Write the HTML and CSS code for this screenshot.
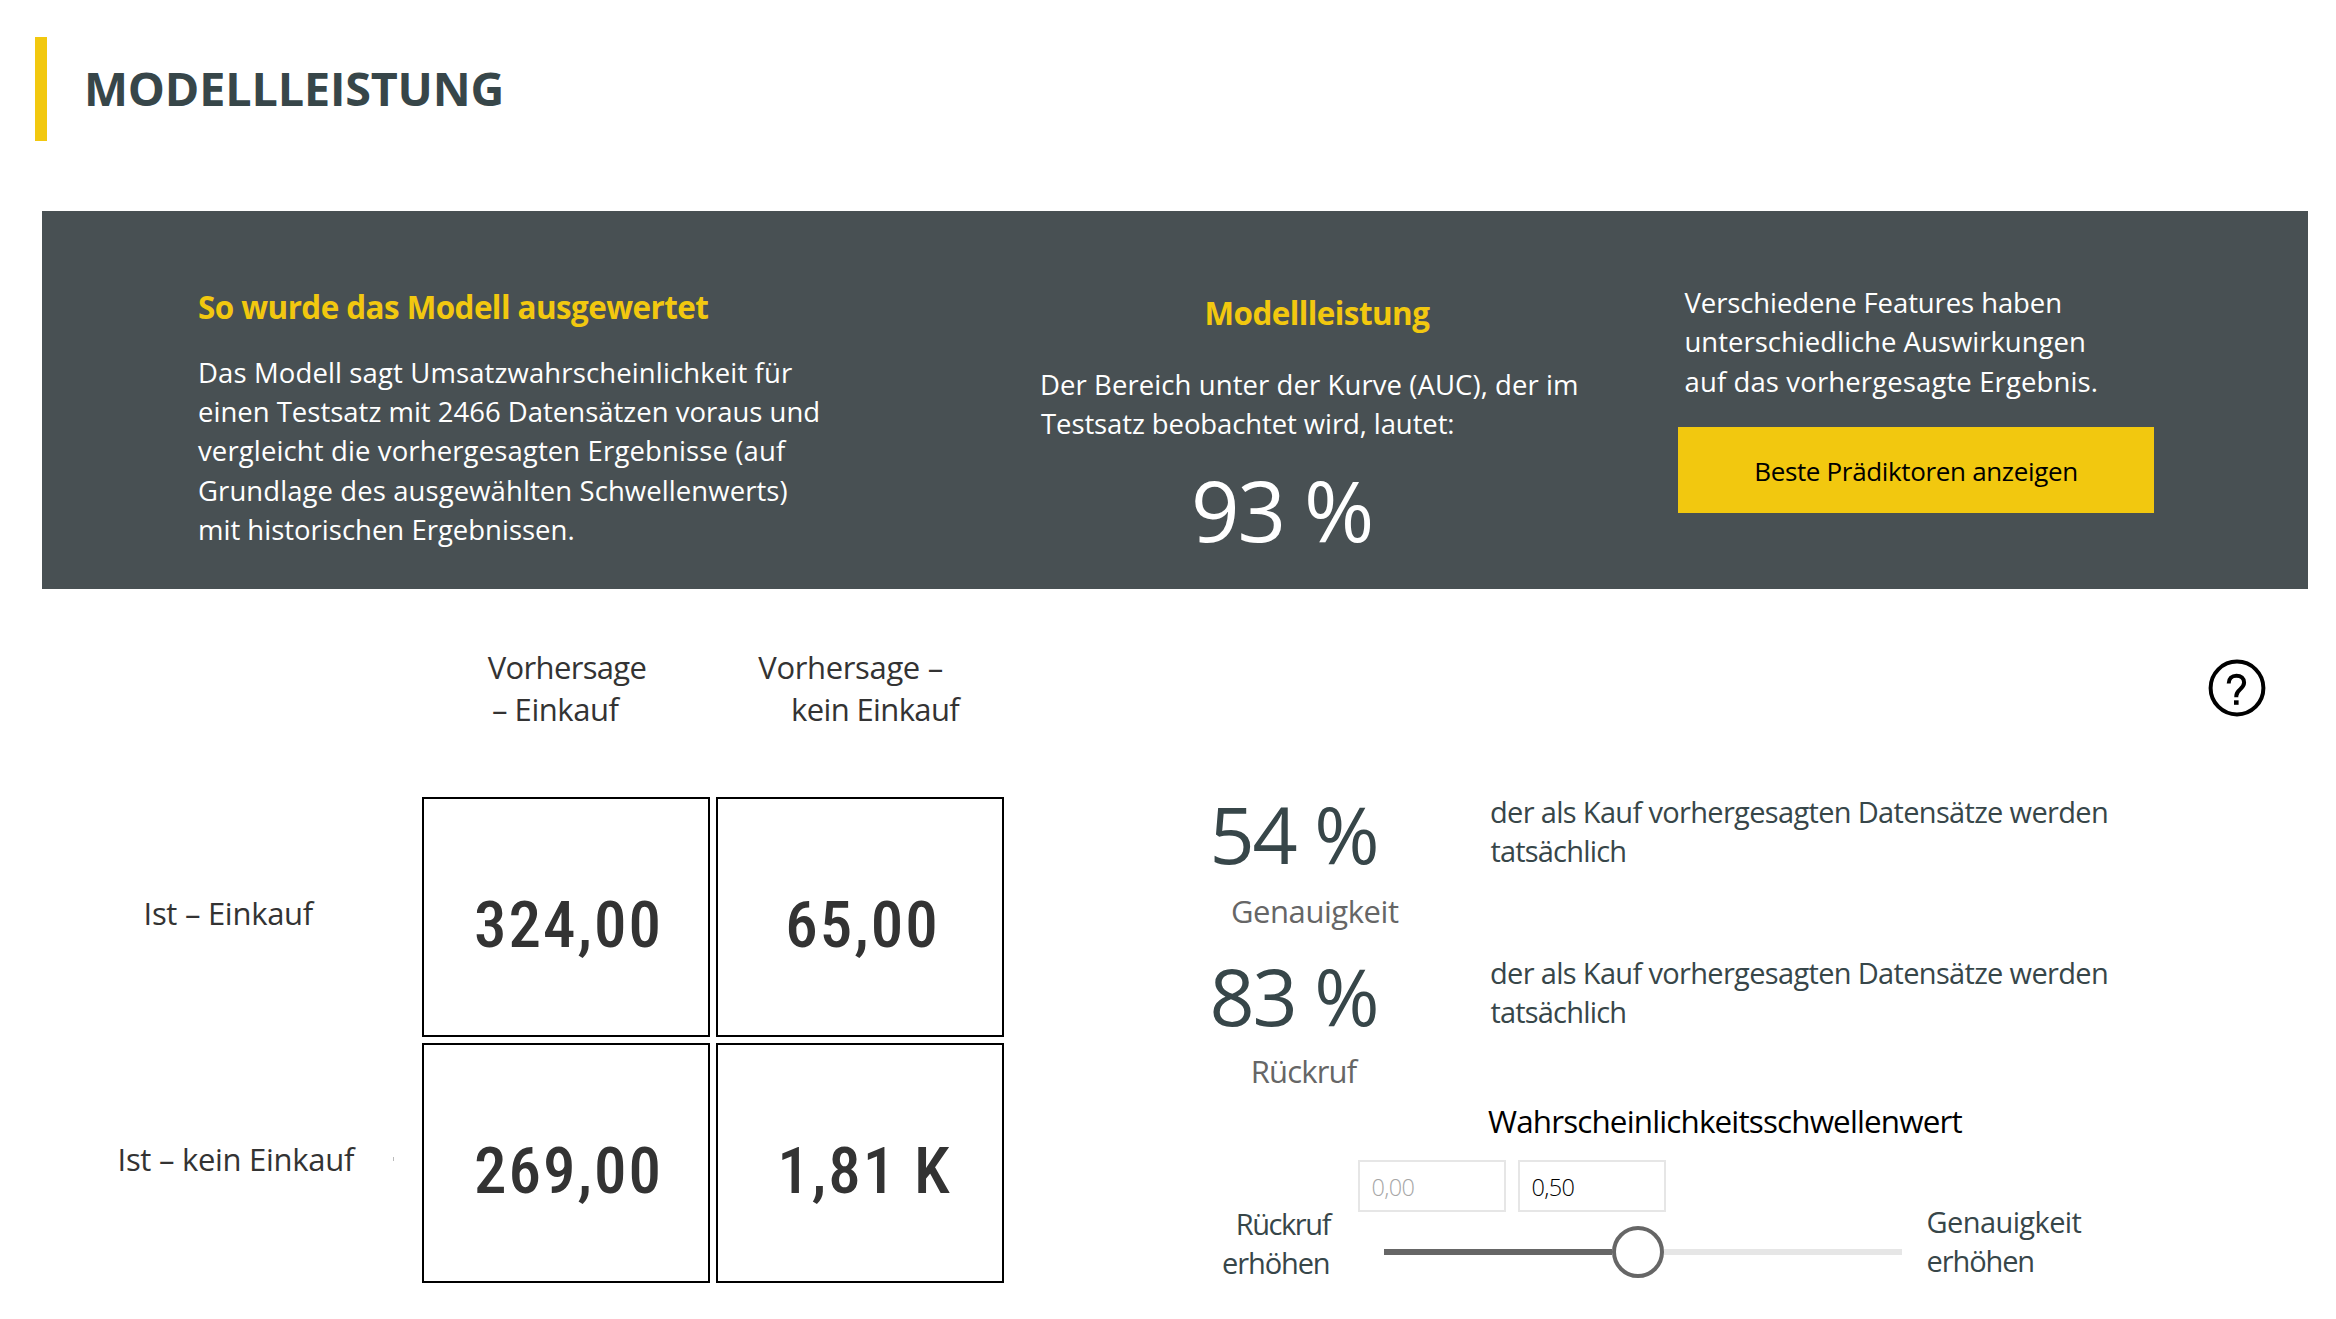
FILE: index.html
```html
<!DOCTYPE html>
<html lang="de">
<head>
<meta charset="utf-8">
<title>Modellleistung</title>
<link rel="stylesheet" href="styles.css">
</head>
<body>
<header class="page-header">
  <div class="accent"></div>
  <h1 class="page-title">MODELLLEISTUNG</h1>
</header>

<section class="banner">
  <div class="evaluation">
    <h2 class="banner-heading">So wurde das Modell ausgewertet</h2>
    <p class="banner-text">
      <span class="line looser">Das Modell sagt Umsatzwahrscheinlichkeit für</span>
      <span class="line">einen Testsatz mit 2466 Datensätzen voraus und</span>
      <span class="line looser">vergleicht die vorhergesagten Ergebnisse (auf</span>
      <span class="line loose">Grundlage des ausgewählten Schwellenwerts)</span>
      <span class="line">mit historischen Ergebnissen.</span>
    </p>
  </div>
  <div class="performance">
    <h2 class="banner-heading indent">Modellleistung</h2>
    <p class="banner-text">
      <span class="line loose">Der Bereich unter der Kurve (AUC), der im</span>
      <span class="line tight first-t">Testsatz beobachtet wird, lautet:</span>
    </p>
    <div class="auc">93 %</div>
  </div>
  <div class="features">
    <p class="banner-text">
      <span class="line tight">Verschiedene Features haben</span>
      <span class="line">unterschiedliche Auswirkungen</span>
      <span class="line looser">auf das vorhergesagte Ergebnis.</span>
    </p>
    <button class="predictors">Beste Prädiktoren anzeigen</button>
  </div>
</section>

<main class="content">
  <section class="matrix">
    <div></div>
    <div class="col-label buy"><span class="line">Vorhersage</span><span class="line second">– Einkauf</span></div>
    <div class="col-label no-buy"><span class="line">Vorhersage –</span><span class="line second">kein Einkauf</span></div>
    <div class="row-label">Ist – Einkauf</div>
    <div class="cell"><span class="value">324,00</span></div>
    <div class="cell"><span class="value">65,00</span></div>
    <div class="row-label wide">Ist – kein Einkauf<i class="tick"></i></div>
    <div class="cell"><span class="value">269,00</span></div>
    <div class="cell last"><span class="value">1,81 K</span></div>
  </section>

  <section class="details">
    <svg class="help" viewBox="0 0 58 58" fill="none" stroke="#000">
      <circle cx="29" cy="29" r="26.4" stroke-width="4"/>
      <path d="M20.700 24.400c0-4.900 3.200-7.700 7.700-7.700 4.600 0 7.700 2.800 7.700 6.900 0 6.500-7.800 6.700-7.800 13.400v1.300" stroke-width="4"/>
      <path d="M28.300 41.300v4.500" stroke-width="4.600"/>
    </svg>
    <div class="metrics">
      <div class="metric">
        <div class="percent">54 %</div>
        <div class="metric-name">Genauigkeit</div>
      </div>
      <p class="metric-text"><span class="line">der als Kauf vorhergesagten Datensätze werden</span><span class="line">tatsächlich</span></p>
      <div class="metric recall">
        <div class="percent">83 %</div>
        <div class="metric-name">Rückruf</div>
      </div>
      <p class="metric-text"><span class="line">der als Kauf vorhergesagten Datensätze werden</span><span class="line">tatsächlich</span></p>
    </div>
    <h3 class="threshold-title">Wahrscheinlichkeitsschwellenwert</h3>
    <div class="threshold">
      <div class="end-label left"><span class="line">Rückruf</span><span class="line">erhöhen</span></div>
      <div class="control">
        <div class="inputs"><div class="box disabled">0,00</div><div class="box">0,50</div></div>
        <div class="slider"><div class="filled"></div><div class="handle"></div><div class="rest"></div></div>
      </div>
      <div class="end-label right"><span class="line">Genauigkeit</span><span class="line">erhöhen</span></div>
    </div>
  </section>
</main>
</body>
</html>
```
FILE: styles.css
```css
* { box-sizing: border-box; }
body {
  margin: 0;
  width: 2336px;
  height: 1319px;
  overflow: hidden;
  background: #fff;
  color: #333;
  font-family: "Open Sans", "Noto Sans", sans-serif;
}
h1, h2, h3, p { margin: 0; }
.line { display: block; white-space: nowrap; }

.page-header { display: flex; height: 211px; padding: 37px 0 0 35px; }
.accent { width: 12px; height: 104px; background: #f2c80f; }
.page-title {
  margin: 20.5px 0 0 37px;
  font-size: 46.7px;
  line-height: 60px;
  font-weight: 700;
  letter-spacing: -0.16px;
  color: #374649;
}

.banner {
  display: flex;
  width: 2266px;
  height: 378px;
  margin-left: 42px;
  padding-left: 156px;
  background: #485053;
  color: #fff;
}
.banner-heading {
  font-size: 31.4px;
  line-height: 44px;
  font-weight: 700;
  letter-spacing: -0.55px;
  color: #f2c80f;
  white-space: nowrap;
}
.banner-text { font-size: 27.5px; line-height: 39.2px; }
.banner-text .looser { letter-spacing: 0.12px; }
.banner-text .loose { letter-spacing: 0.08px; }
.banner-text .tight { letter-spacing: -0.1px; }
.evaluation { width: 842px; padding-top: 74px; }
.evaluation .banner-text { margin-top: 24px; }
.performance { width: 638px; padding-top: 80px; }
.performance .indent { margin-left: 164.5px; }
.performance .banner-text { margin-top: 30px; }
.performance .first-t { margin-left: 1px; }
.auc {
  margin: 16px 0 0 151px;
  font-size: 85px;
  line-height: 100px;
  letter-spacing: -2.1px;
}
.features { padding-top: 72px; }
.features .banner-text { padding-left: 6.5px; line-height: 39.4px; }
.predictors {
  display: block;
  width: 476px;
  height: 86px;
  margin-top: 25.8px;
  padding: 2px 0 0;
  border: 0;
  background: #f2c80f;
  color: #000;
  font: 400 26px "Open Sans", "Noto Sans", sans-serif;
  letter-spacing: -0.34px;
}

.content { display: flex; }
.matrix {
  display: grid;
  grid-template-columns: 416px 288px 288px;
  grid-template-rows: 202px 240px 240px;
  gap: 6px;
}
.col-label, .row-label { font-size: 31px; font-weight: 400; }
.col-label { padding-top: 56.5px; line-height: 42.9px; }
.buy { padding-left: 65.8px; letter-spacing: -0.67px; }
.buy .second { padding-left: 4.2px; letter-spacing: -0.46px; }
.no-buy { padding-left: 42.3px; letter-spacing: -0.35px; }
.no-buy .second { padding-left: 32.7px; letter-spacing: -0.62px; }
.row-label { display: flex; align-items: center; padding: 0 22px 8px 143.5px; letter-spacing: -0.28px; white-space: nowrap; }
.wide { padding-left: 117.5px; }
.tick { width: 1px; height: 4px; margin-left: auto; background: #bbb; }
.cell {
  display: flex;
  align-items: center;
  justify-content: center;
  padding: 15px 0 0 5px;
  border: 2px solid #000;
}
.last { padding-left: 9px; }
.value {
  font-family: Roboto, sans-serif;
  font-size: 65px;
  font-weight: 500;
  font-stretch: 85%;
  letter-spacing: 2px;
}

.details { display: flex; flex-direction: column; flex: 1; padding-left: 205.4px; }
.help { width: 58px; height: 58px; margin: 70px 70px 0 auto; }
.metrics {
  display: grid;
  grid-template-columns: 280.6px 1fr;
  row-gap: 17.5px;
  margin-top: 71.3px;
}
.metric { height: 143.4px; }
.percent { padding-top: 1px; font-size: 79px; line-height: 90px; letter-spacing: -2px; color: #374649; }
.metric-name {
  margin: 10.4px 0 0 21.6px;
  font-size: 31px;
  line-height: 42px;
  letter-spacing: -0.44px;
  color: #666;
}
.recall .percent { padding-top: 2px; }
.recall .metric-name { margin: 8.6px 0 0 41.4px; letter-spacing: -0.83px; }
.metric-text {
  padding-top: 3.7px;
  font-size: 29px;
  line-height: 39px;
  letter-spacing: -0.67px;
  color: #374649;
}
.metric-text .line + .line { padding-left: 0.5px; letter-spacing: -0.82px; }
.threshold-title {
  margin: 6px 0 0 278.6px;
  font-size: 31.4px;
  line-height: 44px;
  font-weight: 400;
  letter-spacing: -0.84px;
  color: #000;
}
.threshold { display: flex; margin-top: 17.3px; }
.end-label { font-size: 29px; line-height: 39px; color: #374649; }
.left { width: 120.6px; padding-top: 44.5px; text-align: right; letter-spacing: -1.41px; }
.left .line + .line { padding-right: 0.5px; letter-spacing: -1.12px; }
.right { padding: 42.5px 0 0 24.6px; letter-spacing: -0.6px; }
.right .line + .line { letter-spacing: -1.12px; }
.control { width: 544px; margin-left: 28px; }
.inputs { display: flex; gap: 12px; }
.box {
  width: 148px;
  height: 52px;
  padding: 1px 0 0 11.5px;
  border: 2px solid #e6e6e6;
  font-size: 23.5px;
  line-height: 48px;
  font-weight: 300;
  letter-spacing: -0.63px;
  color: #000;
}
.disabled { color: #a6a6a6; }
.slider { display: flex; align-items: center; margin: 14px 0 0 26px; }
.filled { width: 228px; height: 6px; background: #666; }
.handle { width: 52px; height: 52px; border: 4px solid #666; border-radius: 50%; }
.rest { width: 238px; height: 6px; background: #e6e6e6; }
```
